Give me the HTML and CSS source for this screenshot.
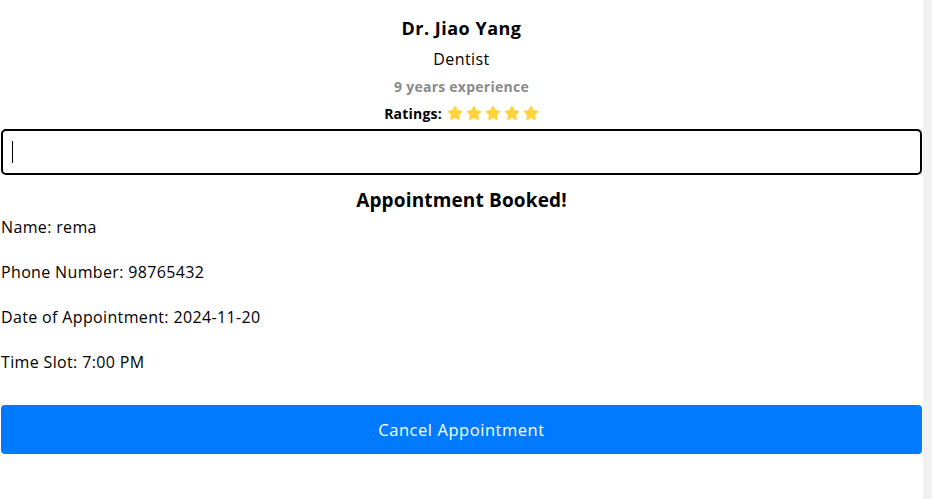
FILE: index.html
```html
<!DOCTYPE html>
<html>
<head>
<meta charset="utf-8">
<link rel="stylesheet" href="styles.css">
</head>
<body>
<div class="page">
  <main class="main">
    <h2 class="doc-name">Dr. Jiao Yang</h2>
    <p class="speciality">Dentist</p>
    <p class="experience">9 years experience</p>
    <div class="ratings">
      <span class="ratings-label">Ratings:</span>
      <span class="stars">
        <svg class="star" viewBox="0 0 576 512"><path d="M316.9 18C311.6 7 300.4 0 288.1 0s-23.4 7-28.8 18L195 150.3 51.4 171.5c-12 1.8-22 10.2-25.7 21.7s-.7 24.2 7.9 32.7L137.8 329 113.2 474.7c-2 12 3 24.200 12.9 31.3s23 8 33.8 2.3l128.3-68.5 128.3 68.5c10.8 5.7 23.9 4.9 33.8-2.3s14.9-19.3 12.9-31.3L438.5 329 542.7 225.9c8.6-8.5 11.7-21.2 7.9-32.7s-13.7-19.9-25.7-21.7L381.2 150.3 316.9 18z"/></svg>
        <svg class="star" viewBox="0 0 576 512"><path d="M316.9 18C311.6 7 300.4 0 288.1 0s-23.4 7-28.8 18L195 150.3 51.4 171.5c-12 1.8-22 10.2-25.7 21.7s-.7 24.2 7.9 32.7L137.8 329 113.2 474.7c-2 12 3 24.2 12.9 31.3s23 8 33.8 2.3l128.3-68.5 128.3 68.5c10.8 5.7 23.9 4.9 33.8-2.3s14.9-19.3 12.9-31.3L438.5 329 542.7 225.9c8.6-8.5 11.7-21.2 7.9-32.7s-13.7-19.9-25.7-21.7L381.2 150.3 316.9 18z"/></svg>
        <svg class="star" viewBox="0 0 576 512"><path d="M316.9 18C311.6 7 300.4 0 288.1 0s-23.4 7-28.8 18L195 150.3 51.4 171.5c-12 1.8-22 10.2-25.7 21.7s-.7 24.2 7.9 32.7L137.8 329 113.2 474.7c-2 12 3 24.2 12.9 31.3s23 8 33.8 2.3l128.3-68.5 128.3 68.5c10.8 5.7 23.9 4.9 33.8-2.3s14.9-19.3 12.9-31.3L438.5 329 542.7 225.9c8.6-8.5 11.7-21.2 7.9-32.7s-13.7-19.9-25.7-21.7L381.2 150.3 316.9 18z"/></svg>
        <svg class="star" viewBox="0 0 576 512"><path d="M316.9 18C311.6 7 300.4 0 288.1 0s-23.4 7-28.8 18L195 150.3 51.4 171.5c-12 1.8-22 10.2-25.7 21.7s-.7 24.2 7.9 32.7L137.8 329 113.2 474.7c-2 12 3 24.2 12.9 31.3s23 8 33.8 2.3l128.3-68.5 128.3 68.5c10.8 5.7 23.9 4.9 33.8-2.3s14.9-19.3 12.9-31.3L438.5 329 542.7 225.9c8.6-8.5 11.7-21.2 7.9-32.7s-13.7-19.9-25.7-21.7L381.2 150.3 316.9 18z"/></svg>
        <svg class="star" viewBox="0 0 576 512"><path d="M316.9 18C311.6 7 300.4 0 288.1 0s-23.4 7-28.8 18L195 150.3 51.4 171.5c-12 1.8-22 10.2-25.7 21.7s-.7 24.2 7.9 32.7L137.8 329 113.2 474.7c-2 12 3 24.2 12.9 31.3s23 8 33.8 2.3l128.3-68.5 128.3 68.5c10.8 5.7 23.9 4.9 33.8-2.3s14.9-19.3 12.9-31.3L438.5 329 542.7 225.9c8.6-8.5 11.7-21.2 7.9-32.7s-13.7-19.9-25.7-21.7L381.2 150.3 316.9 18z"/></svg>
      </span>
    </div>
    <div class="search-box"><span class="caret"></span></div>
    <h3 class="booked-title">Appointment Booked!</h3>
    <p class="detail detail-first">Name: rema</p>
    <p class="detail">Phone Number: 98765432</p>
    <p class="detail">Date of Appointment: 2024-11-20</p>
    <p class="detail">Time Slot: 7:00 PM</p>
    <button class="cancel-btn">Cancel Appointment</button>
  </main>
  <div class="scroll-track"></div>
</div>
</body>
</html>
```
FILE: styles.css
```css
* { box-sizing: border-box; }
html, body { margin: 0; padding: 0; background: #fff; }
body {
  font-family: "Open Sans", "Liberation Sans", sans-serif;
  color: #000;
}
.page {
  display: flex;
  min-height: 100vh;
}
.main {
  flex: 1;
  display: flex;
  flex-direction: column;
  padding: 0 1px;
}
.scroll-track {
  width: 9px;
  background: #f1f1f1;
}
.doc-name {
  margin: 16px 0 0;
  font-size: 18px;
  line-height: 24px;
  font-weight: 700;
  letter-spacing: 0.5px;
  text-align: center;
}
.speciality {
  margin: 7px 0 0;
  font-size: 16px;
  line-height: 24px;
  letter-spacing: 0.4px;
  text-align: center;
}
.experience {
  margin: 6px 0 0;
  font-size: 14px;
  line-height: 20px;
  font-weight: 700;
  letter-spacing: 0.25px;
  color: #8a8a8a;
  text-align: center;
}
.ratings {
  margin-top: 6px;
  height: 20px;
  display: flex;
  justify-content: center;
  align-items: center;
  gap: 5px;
  font-size: 14px;
  font-weight: 700;
  letter-spacing: 0.2px;
}
.stars {
  display: flex;
  gap: 3px;
}
.star {
  width: 16px;
  height: 14px;
  fill: #ffd43b;
}
.search-box {
  margin-top: 6px;
  height: 46px;
  border: 2px solid #000;
  border-radius: 5px;
  display: flex;
  align-items: center;
  padding-left: 9px;
}
.caret {
  width: 1px;
  height: 22px;
  background: #000;
}
.booked-title {
  margin: 12px 0 0;
  font-size: 19px;
  line-height: 26px;
  font-weight: 700;
  letter-spacing: 0.15px;
  text-align: center;
}
.detail {
  margin: 21px 0 0;
  font-size: 16px;
  line-height: 24px;
  letter-spacing: 0.35px;
}
.detail-first { margin-top: 2px; }
.cancel-btn {
  margin-top: 31px;
  height: 49px;
  border: none;
  border-radius: 4px;
  background: #007bff;
  color: #fff;
  font-family: inherit;
  font-size: 16.5px;
  letter-spacing: 0.55px;
  cursor: pointer;
}
```
